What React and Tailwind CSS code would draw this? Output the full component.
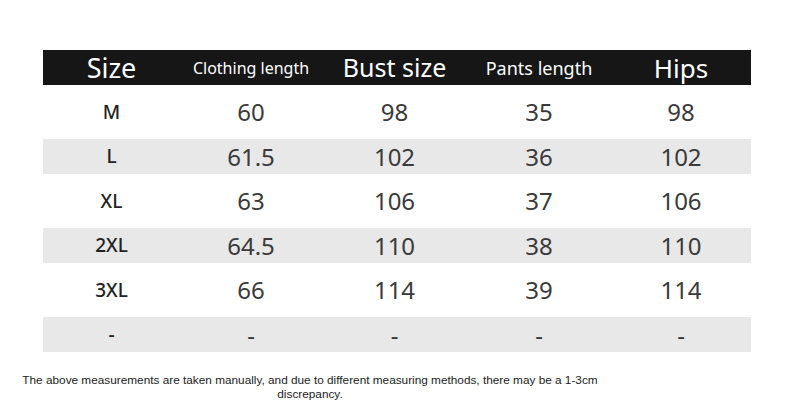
import React from 'react';

const HEAD = [
  { label: 'Size', cls: 'text-[27px]' },
  { label: 'Clothing length', cls: 'text-[16px]' },
  { label: 'Bust size', cls: 'text-[25px]' },
  { label: 'Pants length', cls: 'text-[18px]' },
  { label: 'Hips', cls: 'text-[26px]' },
];

const ROWS = [
  { cells: ['M', '60', '98', '35', '98'], gray: false },
  { cells: ['L', '61.5', '102', '36', '102'], gray: true },
  { cells: ['XL', '63', '106', '37', '106'], gray: false },
  { cells: ['2XL', '64.5', '110', '38', '110'], gray: true },
  { cells: ['3XL', '66', '114', '39', '114'], gray: false },
  { cells: ['-', '-', '-', '-', '-'], gray: true },
];

const COLS = 'grid grid-cols-[137px_142px_145px_144px_140px] items-center';

function App() {
  return (
    <main className="w-[790px] h-[413px] bg-white pt-[50px]" style={{ fontFamily: '"Noto Sans", "Open Sans", sans-serif' }}>
      <div className="ml-[43px] w-[708px]">
        <div className={`${COLS} h-[35px] bg-[#161616] text-white`}>
          {HEAD.map((h) => (
            <div key={h.label} className={`text-center leading-none ${h.cls}`}>{h.label}</div>
          ))}
        </div>

        {ROWS.map((row) => (
          <div
            key={row.cells[0] + row.gray}
            className={row.gray ? `${COLS} h-[35px] bg-[#e8e8e8]` : `${COLS} h-[54px] bg-white`}
          >
            {row.cells.map((c, i) => (
              <div key={i} className={i === 0 ? 'text-center text-[19px] font-medium leading-none text-[#222]' : 'text-center text-[24px] leading-none text-[#3a3a3a]'}>{c}</div>
            ))}
          </div>
        ))}
      </div>

      <div className="w-[620px] mt-[21px] text-center text-[11.8px] leading-[14px] text-[#222]" style={{ fontFamily: '"Liberation Sans", Arial, sans-serif' }}>
        <p>The above measurements are taken manually, and due to different measuring methods, there may be a 1-3cm</p>
        <p>discrepancy.</p>
      </div>
    </main>
  );
}

export default App;
